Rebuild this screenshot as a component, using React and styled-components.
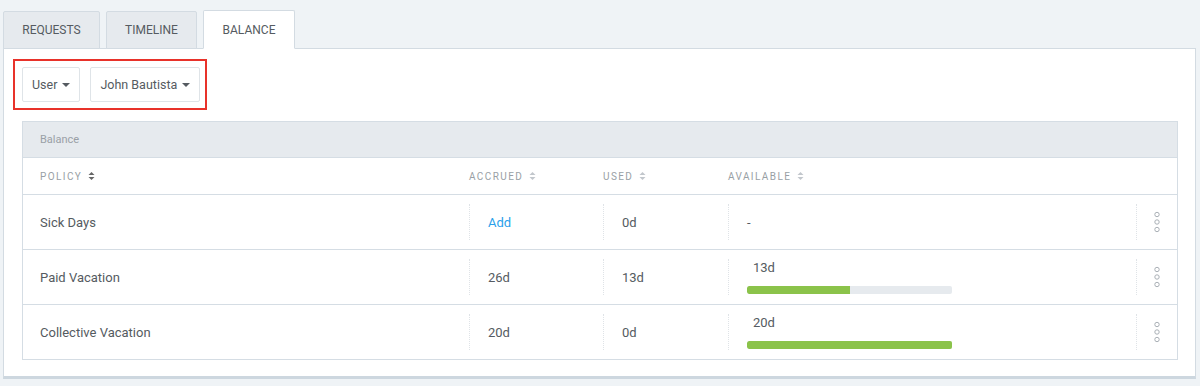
import styled, { createGlobalStyle } from "styled-components"

const GlobalStyle = createGlobalStyle`
    body {
        margin: 0;
        background: #eff3f6;
        font-family: Roboto, "Liberation Sans", sans-serif;
    }
`

const policies = [
    { name: "Sick Days", accrued: null, used: "0d", available: null },
    { name: "Paid Vacation", accrued: "26d", used: "13d", available: "13d", ratio: 0.5 },
    { name: "Collective Vacation", accrued: "20d", used: "0d", available: "20d", ratio: 1 },
]

const columns = "446px 134px 125px 408px 1fr"

function SortIcon({ dark }) {
    const c = dark ? "#666" : "#c2c7cc"
    return (
        <svg width="7" height="10" viewBox="0 0 7 10">
            <path d="M3.5 1 L6.5 4 H0.5 Z" fill={c} />
            <path d="M3.5 9 L6.5 6 H0.5 Z" fill={c} />
        </svg>
    )
}

function MoreIcon() {
    return (
        <svg width="8" height="22" viewBox="0 0 8 22">
            <circle cx="4" cy="3.5" r="2.2" fill="none" stroke="#aab0b6" strokeWidth="1" />
            <circle cx="4" cy="11" r="2.2" fill="none" stroke="#aab0b6" strokeWidth="1" />
            <circle cx="4" cy="18.5" r="2.2" fill="none" stroke="#aab0b6" strokeWidth="1" />
        </svg>
    )
}

export default function App() {
    return (
        <>
            <GlobalStyle />
            <Page>
                <Tabs>
                    <Tab $w={97}>Requests</Tab>
                    <Tab $w={91}>Timeline</Tab>
                    <Tab $w={92} $active>Balance</Tab>
                </Tabs>
                <Panel>
                    <Filters>
                        <Select>User <Caret /></Select>
                        <Select>John Bautista <Caret /></Select>
                    </Filters>
                    <Table>
                        <TableTitle>Balance</TableTitle>
                        <HeadRow>
                            <HeadCell $first>Policy <SortIcon dark /></HeadCell>
                            <HeadCell>Accrued <SortIcon /></HeadCell>
                            <HeadCell>Used <SortIcon /></HeadCell>
                            <HeadCell>Available <SortIcon /></HeadCell>
                            <HeadCell />
                        </HeadRow>
                        {policies.map((p) => (
                            <Row key={p.name}>
                                <NameCell>{p.name}</NameCell>
                                <Cell>{p.accrued ? p.accrued : <AddLink>Add</AddLink>}</Cell>
                                <Cell>{p.used}</Cell>
                                <Cell>
                                    {p.available ? (
                                        <Available>
                                            <span>{p.available}</span>
                                            <Track>
                                                <Fill style={{ width: `${p.ratio * 100}%` }} />
                                            </Track>
                                        </Available>
                                    ) : "-"}
                                </Cell>
                                <ActionCell><MoreIcon /></ActionCell>
                            </Row>
                        ))}
                    </Table>
                </Panel>
            </Page>
        </>
    )
}

const Page = styled.div`
    padding: 10px 4px 0 3px;
    height: 386px;
    box-sizing: border-box;
`

const Tabs = styled.div`
    display: flex;
    gap: 6px;
    align-items: flex-end;
    position: relative;
    z-index: 1;
    margin-bottom: -1px;
`

const Tab = styled.div`
    box-sizing: border-box;
    width: ${p => p.$w}px;
    height: ${p => p.$active ? "39px" : "38px"};
    display: flex;
    align-items: center;
    justify-content: center;
    font-size: 12px;
    text-transform: uppercase;
    color: #555b61;
    background: ${p => p.$active ? "#ffffff" : "#e6eaee"};
    border: 1px solid #d3dbe2;
    border-bottom-color: ${p => p.$active ? "#ffffff" : "#d3dbe2"};
    border-radius: 2px 2px 0 0;
`

const Panel = styled.div`
    background: #ffffff;
    border: 1px solid #d3dbe2;
    border-bottom: 3px solid #cdd7df;
    padding: 10px 17px 16px 18px;
    height: 331px;
    box-sizing: border-box;
`

const Filters = styled.div`
    display: inline-flex;
    gap: 10px;
    margin-left: -9px;
    padding: 6px 5px 6px 7px;
    border: 2px solid #e8322a;
`

const Select = styled.div`
    height: 35px;
    box-sizing: border-box;
    padding: 0 9px;
    display: flex;
    align-items: center;
    gap: 5px;
    font-size: 12.5px;
    color: #555b61;
    border: 1px solid #dfe4e8;
    border-radius: 2px;
`

const Caret = styled.span`
    width: 0;
    height: 0;
    border-left: 4px solid transparent;
    border-right: 4px solid transparent;
    border-top: 4px solid #555b61;
`

const Table = styled.div`
    margin-top: 11px;
    border: 1px solid #d5dde4;
`

const TableTitle = styled.div`
    height: 35px;
    display: flex;
    align-items: center;
    padding-left: 17px;
    background: #e6eaee;
    border-bottom: 1px solid #d5dde4;
    font-size: 11px;
    color: #9aa0a6;
`

const HeadRow = styled.div`
    display: grid;
    grid-template-columns: ${columns};
    height: 36px;
    border-bottom: 1px solid #d5dde4;
`

const HeadCell = styled.div`
    display: flex;
    align-items: center;
    gap: 6px;
    padding-left: ${p => p.$first ? "17px" : "0"};
    font-size: 10px;
    letter-spacing: 1.4px;
    text-transform: uppercase;
    color: #999fa5;
`

const Row = styled.div`
    display: grid;
    grid-template-columns: ${columns};
    height: 54px;
    border-bottom: 1px solid #d5dde4;
    &:last-child { border-bottom: none; }
`

const NameCell = styled.div`
    display: flex;
    align-items: center;
    padding-left: 17px;
    font-size: 13px;
    color: #555b61;
`

const Cell = styled.div`
    display: flex;
    align-items: center;
    margin: 9px 0;
    padding-left: 18px;
    border-left: 1px dotted #dfe3e7;
    font-size: 13px;
    color: #555b61;
`

const ActionCell = styled(Cell)`
    padding-left: 16px;
`

const AddLink = styled.span`
    color: #2a9fea;
    cursor: pointer;
`

const Available = styled.div`
    display: flex;
    flex-direction: column;
    gap: 11px;
    span { padding-left: 6px; }
`

const Track = styled.div`
    width: 205px;
    height: 8px;
    border-radius: 2px;
    background: #e6eaee;
    overflow: hidden;
`

const Fill = styled.div`
    height: 100%;
    background: #8bc34a;
    border-radius: 2px 0 0 2px;
`
